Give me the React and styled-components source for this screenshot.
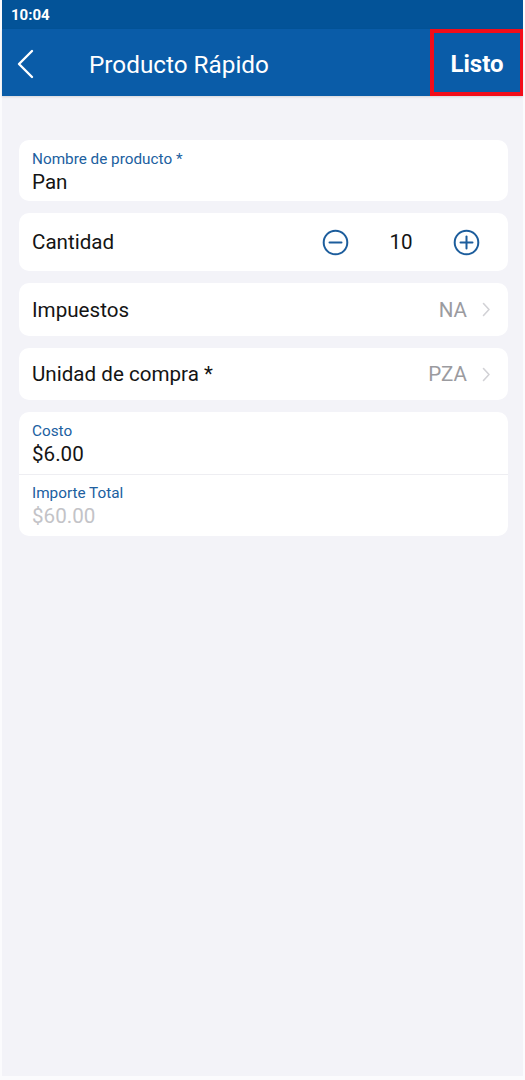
import React from "react";
import styled, { createGlobalStyle } from "styled-components";

const Global = createGlobalStyle`
  html, body { margin: 0; padding: 0; background: #f3f3f8; }
  body { font-family: Roboto, "Noto Sans", "Liberation Sans", sans-serif; }
  * { box-sizing: border-box; }
`;

const Screen = styled.div`
  width: 525px;
  min-height: 1080px;
  display: flex;
  flex-direction: column;
  background: #f3f3f8;
  border-left: 2px solid #fbfbfd;
  border-right: 2px solid #fbfbfd;
  border-bottom: 4px solid #fbfbfd;
`;

const StatusBar = styled.div`
  height: 29px;
  background: #035398;
  color: #fff;
  font-size: 15px;
  font-weight: 700;
  display: flex;
  align-items: center;
  padding-left: 9px;
  padding-top: 1px;
`;

const NavBar = styled.div`
  height: 67px;
  background: #0a5ca8;
  display: flex;
  align-items: center;
  position: relative;
  box-shadow: 0 1px 2px rgba(0, 0, 0, 0.12);
`;

const BackButton = styled.div`
  width: 87px;
  height: 100%;
  display: flex;
  align-items: center;
  padding-left: 14px;
  padding-top: 2px;
`;

const Title = styled.div`
  flex: 1;
  color: #fff;
  font-size: 24.3px;
  font-weight: 400;
  padding-top: 3px;
`;

const DoneButton = styled.div`
  width: 93px;
  height: 67px;
  border: 4px solid #f20d1a;
  border-right-width: 3px;
  color: #fff;
  font-size: 24px;
  font-weight: 700;
  display: flex;
  align-items: center;
  justify-content: center;
  padding-left: 0px;
  padding-top: 3px;
`;

const Content = styled.div`
  display: flex;
  flex-direction: column;
  gap: 12px;
  padding: 44px 15px 0 17px;
`;

const Card = styled.div`
  background: #fff;
  border-radius: 10px;
  display: flex;
  flex-direction: column;
  overflow: hidden;
`;

const Field = styled.div`
  display: flex;
  flex-direction: column;
  padding: ${(p) => p.$pad || "9px 13px 7px"};
  border-top: ${(p) => (p.$divider ? "1px solid #eeeef2" : "none")};
`;

const FieldLabel = styled.div`
  font-size: 15.3px;
  line-height: 20px;
  color: #20609f;
`;

const FieldValue = styled.div`
  font-size: 20.6px;
  line-height: 26px;
  color: ${(p) => (p.$muted ? "#c3c3c7" : "#141414")};
`;

const Row = styled.div`
  height: ${(p) => p.$h}px;
  display: flex;
  align-items: center;
  padding: 0 17px 0 13px;
`;

const RowLabel = styled.div`
  flex: 1;
  font-size: 20.6px;
  color: #141414;
`;

const RowValue = styled.div`
  font-size: 20.6px;
  color: #9b9b9f;
  margin-right: 15px;
`;

const Stepper = styled.div`
  display: flex;
  align-items: center;
  margin-right: 11px;
`;

const StepCount = styled.div`
  width: 104px;
  text-align: center;
  font-size: 20.6px;
  color: #141414;
`;

const Back = () => (
  <svg width="20" height="30" viewBox="0 0 20 30" fill="none">
    <path d="M16 2 L3 15 L16 28" stroke="#fff" strokeWidth="2.4" strokeLinecap="round" strokeLinejoin="round" />
  </svg>
);

const CircleIcon = ({ plus }) => (
  <svg width="27" height="27" viewBox="0 0 27 27" fill="none">
    <circle cx="13.5" cy="13.5" r="11.8" stroke="#1c5d9c" strokeWidth="2" />
    <path d="M7.5 13.5 H19.5" stroke="#1c5d9c" strokeWidth="2" strokeLinecap="round" />
    {plus && <path d="M13.5 7.5 V19.5" stroke="#1c5d9c" strokeWidth="2" strokeLinecap="round" />}
  </svg>
);

const Chevron = () => (
  <svg width="9" height="15" viewBox="0 0 9 15" fill="none">
    <path d="M1.5 1.5 L7 7.5 L1.5 13.5" stroke="#d2d2d6" strokeWidth="1.6" strokeLinecap="round" strokeLinejoin="round" />
  </svg>
);

export default function App() {
  return (
    <>
      <Global />
      <Screen>
        <StatusBar>10:04</StatusBar>
        <NavBar>
          <BackButton>
            <Back />
          </BackButton>
          <Title>Producto Rápido</Title>
          <DoneButton>Listo</DoneButton>
        </NavBar>
        <Content>
          <Card>
            <Field $pad="9px 13px 6px">
              <FieldLabel>Nombre de producto *</FieldLabel>
              <FieldValue>Pan</FieldValue>
            </Field>
          </Card>
          <Card>
            <Row $h={58}>
              <RowLabel>Cantidad</RowLabel>
              <Stepper>
                <CircleIcon />
                <StepCount>10</StepCount>
                <CircleIcon plus />
              </Stepper>
            </Row>
          </Card>
          <Card>
            <Row $h={53}>
              <RowLabel>Impuestos</RowLabel>
              <RowValue>NA</RowValue>
              <Chevron />
            </Row>
          </Card>
          <Card>
            <Row $h={52}>
              <RowLabel>Unidad de compra *</RowLabel>
              <RowValue>PZA</RowValue>
              <Chevron />
            </Row>
          </Card>
          <Card>
            <Field>
              <FieldLabel>Costo</FieldLabel>
              <FieldValue>$6.00</FieldValue>
            </Field>
            <Field $divider $pad="8px 13px 7px">
              <FieldLabel>Importe Total</FieldLabel>
              <FieldValue $muted>$60.00</FieldValue>
            </Field>
          </Card>
        </Content>
      </Screen>
    </>
  );
}
